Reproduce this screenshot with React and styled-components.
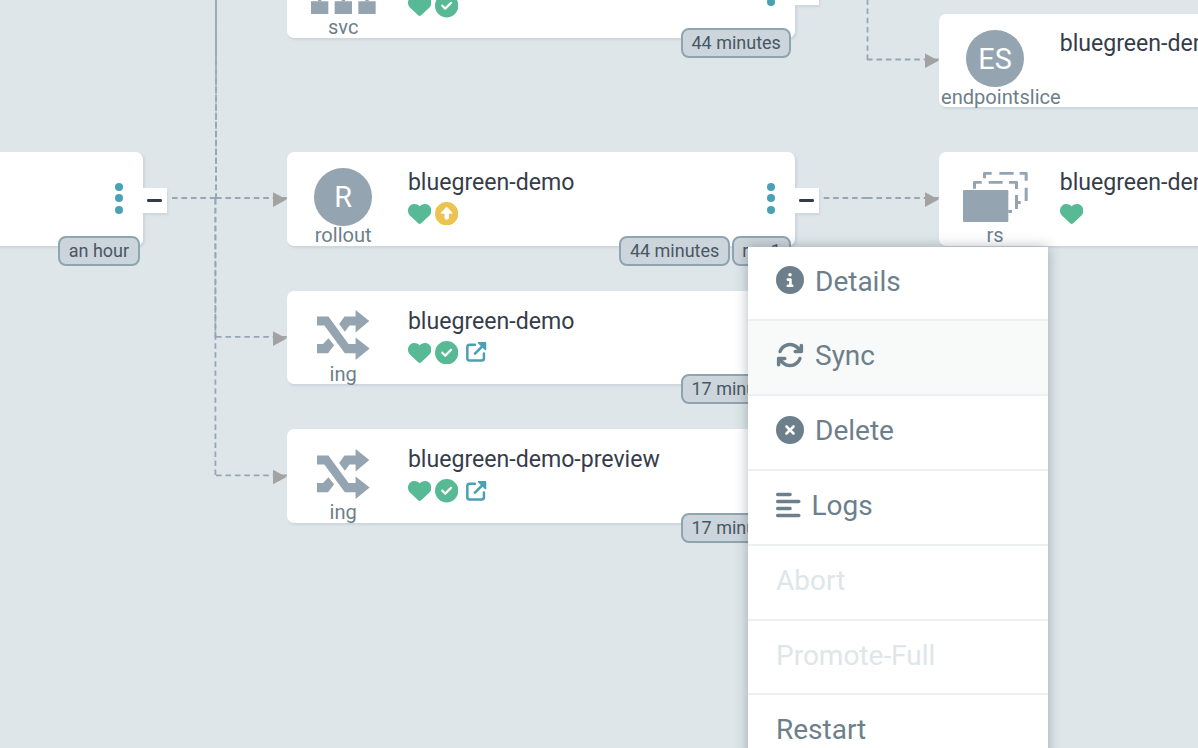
import React from "react";
import styled, { createGlobalStyle, css } from "styled-components";
import {
  FaHeart,
  FaCircleCheck,
  FaCircleUp,
  FaCircleInfo,
  FaArrowsRotate,
  FaCircleXmark,
  FaAlignLeft,
} from "react-icons/fa6";

const Global = createGlobalStyle`
  *, *::before, *::after { box-sizing: border-box; }
  body { margin: 0; overflow: hidden; font-family: Roboto, "Liberation Sans", sans-serif; }
`;

const Canvas = styled.main`
  position: relative;
  width: 1198px;
  height: 748px;
  overflow: hidden;
  background: #dee6e9;
`;

const EdgeLayer = styled.svg`
  position: absolute;
  inset: 0;
  fill: none;
  stroke: #95a7b6;
  stroke-width: 1.8;
`;

const Node = styled.article`
  position: absolute;
  left: ${(p) => p.$x}px;
  top: ${(p) => p.$y}px;
  width: 508px;
  height: 93.6px;
  display: flex;
  border-radius: 7px;
  background: #fff;
  box-shadow: 1.4px 1.6px 2px #ccd6dd;
`;

const KindColumn = styled.div`
  flex: none;
  width: 112px;
  padding: 16px 2px 0;
  display: flex;
  flex-direction: column;
  align-items: safe center;
`;

const KindIcon = styled.div`
  height: 57px;
  display: flex;
  align-items: center;
  color: #94a4b1;
  svg { display: block; fill: currentColor; }
`;

const Initials = styled.span`
  width: 57.6px;
  height: 57.6px;
  flex: none;
  margin-top: 0.6px;
  border-radius: 50%;
  background: #94a4b1;
  color: #fff;
  font-size: 28.8px;
  line-height: 59px;
  text-align: center;
`;

const KindLabel = styled.span`
  font-size: 20.1px;
  line-height: 20px;
  color: #6d7f8b;
  white-space: nowrap;
`;

const Body = styled.div`
  flex: 1;
  min-width: 0;
  padding: 18.9px 0 0 8.7px;
`;

const Title = styled.div`
  font-size: 23.1px;
  line-height: 24px;
  color: #363c4a;
  white-space: nowrap;
`;

const StatusRow = styled.div`
  height: 24px;
  margin-top: 6.7px;
  display: flex;
  align-items: center;
  gap: 3.4px;
  font-size: 23.4px;
`;

const statusColors = { healthy: "#58ba94", outOfSync: "#ecc250", link: "#48a2b4" };

const Status = styled.span`
  display: flex;
  color: ${(p) => statusColors[p.$tone]};
  ${(p) =>
    p.$tone === "link" &&
    css`
      margin-left: 5px;
    `}
`;

const Dots = styled.div`
  width: 8px;
  margin: 31px 20.5px 0 0;
  display: flex;
  flex-direction: column;
  gap: 3.3px;
  span { width: 8px; height: 8px; border-radius: 50%; background: #48a2b4; }
`;

const Expander = styled.div`
  position: absolute;
  left: 100%;
  top: 36px;
  width: 23.4px;
  height: 25px;
  display: flex;
  align-items: center;
  padding-left: 4px;
  background: #fff;
  box-shadow: 1.4px 1.6px 2px #ccd6dd;
  &::before {
    content: "";
    width: 14.6px;
    height: 2.4px;
    border-radius: 1.2px;
    background: #363c4a;
  }
`;

const Badges = styled.div`
  position: absolute;
  right: 3.8px;
  bottom: -20px;
  display: flex;
  gap: 2px;
`;

const Badge = styled.span`
  height: 30px;
  padding: 0 8.5px;
  border: 2px solid #8fa4b1;
  border-radius: 8px;
  background: #ccd5dc;
  color: #495763;
  font-size: 18px;
  line-height: 26px;
  white-space: nowrap;
`;

const Menu = styled.nav`
  position: absolute;
  left: 748px;
  top: 247px;
  width: 300px;
  height: 530px;
  display: flex;
  flex-direction: column;
  background: #fff;
  box-shadow: 0 0 12px rgba(40, 55, 65, 0.35);
`;

const MenuItem = styled.div`
  flex: none;
  height: ${(p) => (p.$first ? 74.2 : 74.85)}px;
  padding: 0 28px 5.4px;
  display: flex;
  align-items: center;
  gap: 11px;
  border-bottom: 2px solid #edf1f4;
  background: ${(p) => (p.$active ? "#f8fafa" : "#fff")};
  color: ${(p) => (p.$disabled ? "#dee6e9" : "#6d7f8b")};
  font-size: 28px;
  line-height: 36px;
  svg { flex: none; width: ${(p) => (p.$narrowIcon ? "0.875em" : "1em")}; }
`;

const MenuLabel = styled.span`
  padding-top: 2.7px;
`;

function ExternalLink() {
  return (
    <svg width="20.6" height="20.6" viewBox="0 0 62 62">
      <path d="M27 8H11Q4 8 4 15V49Q4 56 11 56H47Q54 56 54 49V35" fill="none" stroke="currentColor" strokeWidth="7.6" strokeLinecap="round" />
      <path d="M27 35L52 10" stroke="currentColor" strokeWidth="8" strokeLinecap="round" />
      <path d="M37 0H59Q61 0 61 2V24Q59 26 57 24L36 4Q35 1 37 0Z" fill="currentColor" />
    </svg>
  );
}

function Shuffle() {
  return (
    <svg width="53" height="50" viewBox="0 0 158 149">
      <path d="M0 19H34L94 101H115V82L157 115L115 149V129H83L22 46H0Z" />
      <path d="M115 0L156 33L115 67V46H97L83 65L66 42L82 19H115Z" />
      <path d="M0 101H18L34 84L51 105L33 129H0Z" />
    </svg>
  );
}

function Replicas() {
  return (
    <svg width="65" height="50" viewBox="0 0 195 150">
      <rect x="0" y="54" width="136" height="96" rx="3" />
      <path d="M30 50V31Q30 27 34 27H56V35H39V50ZM77 27H119V35H77ZM138 27H161Q165 27 165 31V51H156V35H138ZM156 69H165V87H173V96H165V111H156ZM136 114H147V123H136Z" />
      <path d="M60 19V4Q60 0 64 0H86V8H69V19ZM109 0H152V8H109ZM170 0H190Q194 0 194 4V26H185V8H170ZM185 47H194V87H185Z" />
    </svg>
  );
}

function Network() {
  return (
    <svg width="65" height="50" viewBox="0 0 195 150">
      <path d="M0 112H52V150H0ZM71 112H123V150H71ZM142 112H194V150H142Z" />
      <path d="M21 112V78H92V44H102V78H173V112H163V88H102V112H92V88H31V112Z" />
      <path d="M71 0H123V44H71Z" />
    </svg>
  );
}

const statusIcons = {
  heart: [FaHeart, "healthy"],
  check: [FaCircleCheck, "healthy"],
  up: [FaCircleUp, "outOfSync"],
  link: [ExternalLink, "link"],
};

function ResourceNode({ x, y, icon, kind, title, statuses = [], badges = [], expander }) {
  return (
    <Node $x={x} $y={y}>
      <KindColumn>
        <KindIcon>{icon}</KindIcon>
        <KindLabel>{kind}</KindLabel>
      </KindColumn>
      <Body>
        <Title>{title}</Title>
        <StatusRow>
          {statuses.map((name) => {
            const [Icon, tone] = statusIcons[name];
            return (
              <Status key={name} $tone={tone}>
                <Icon />
              </Status>
            );
          })}
        </StatusRow>
      </Body>
      <Dots>
        <span />
        <span />
        <span />
      </Dots>
      {expander && <Expander />}
      <Badges>
        {badges.map((b) => (
          <Badge key={b}>{b}</Badge>
        ))}
      </Badges>
    </Node>
  );
}

function Edges() {
  const arrows = [[273, 199.6], [273, 338.6], [273, 477], [925, 60.8], [925, 199.6]];
  return (
    <EdgeLayer width="1198" height="748">
      <g strokeDasharray="5.6 3.85">
        <path d="M172 198H216M216 198H287M216 336.8H287M216 475.3H287" />
        <path d="M823.7 198H868M867 198H939M867 59.5H939" />
      </g>
      <path d="M216 199V-90" strokeDasharray="5.4 3.6" />
      <path d="M216 199V-90" strokeDasharray="5.4 3.37" />
      <path d="M215.4 199V475.3" strokeDasharray="5.4 3.62" />
      <path d="M215.4 199V337" strokeDasharray="5.4 3.43" />
      <path d="M867.5 -0.6V60" strokeDasharray="5.4 3.8" />
      {arrows.map(([x, y]) => (
        <path key={`${x}-${y}`} d={`M${x} ${y - 7.3}L${x + 13.6} ${y}L${x} ${y + 7.3}Z`} fill="#a2a2a2" stroke="none" />
      ))}
    </EdgeLayer>
  );
}

const menuItems = [
  { label: "Details", icon: <FaCircleInfo /> },
  { label: "Sync", icon: <FaArrowsRotate />, active: true },
  { label: "Delete", icon: <FaCircleXmark /> },
  { label: "Logs", icon: <FaAlignLeft />, narrowIcon: true },
  { label: "Abort", disabled: true },
  { label: "Promote-Full", disabled: true },
  { label: "Restart" },
];

export default function App() {
  return (
    <Canvas>
      <Global />
      <Edges />
      <ResourceNode x={-364.6} y={152.2} title="" badges={["an hour"]} expander />
      <ResourceNode x={287.2} y={-55.6} icon={<Network />} kind="svc" title="bluegreen-demo" statuses={["heart", "check"]} badges={["44 minutes"]} expander />
      <ResourceNode x={287.2} y={152.2} icon={<Initials>R</Initials>} kind="rollout" title="bluegreen-demo" statuses={["heart", "up"]} badges={["44 minutes", "rev:1"]} expander />
      <ResourceNode x={287.2} y={290.7} icon={<Shuffle />} kind="ing" title="bluegreen-demo" statuses={["heart", "check", "link"]} badges={["17 minutes"]} />
      <ResourceNode x={287.2} y={429.4} icon={<Shuffle />} kind="ing" title="bluegreen-demo-preview" statuses={["heart", "check", "link"]} badges={["17 minutes"]} />
      <ResourceNode x={939} y={13.5} icon={<Initials>ES</Initials>} kind="endpointslice" title="bluegreen-demo" />
      <ResourceNode x={939} y={152.2} icon={<Replicas />} kind="rs" title="bluegreen-demo" statuses={["heart"]} />
      <Menu>
        {menuItems.map(({ label, icon, active, disabled, narrowIcon }, i) => (
          <MenuItem key={label} $first={i === 0} $active={active} $disabled={disabled} $narrowIcon={narrowIcon}>
            {icon}
            <MenuLabel>{label}</MenuLabel>
          </MenuItem>
        ))}
      </Menu>
    </Canvas>
  );
}
